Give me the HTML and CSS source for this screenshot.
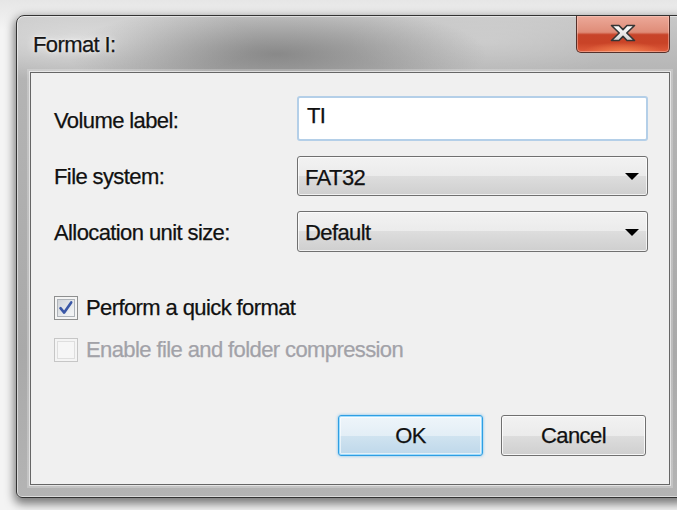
FILE: index.html
```html
<!DOCTYPE html>
<html lang="en">
<head>
<meta charset="utf-8">
<title>Format I:</title>
<link rel="stylesheet" href="styles.css">
</head>
<body>
<div class="window">
  <div class="titlebar">
    <span class="title">Format I:</span>
    <button class="close" type="button" aria-label="Close">
      <svg width="26" height="18" viewBox="0 0 26 18">
        <defs>
          <linearGradient id="xfill" x1="0" y1="0" x2="0" y2="1">
            <stop offset="0" stop-color="#ffffff"/>
            <stop offset="1" stop-color="#d4d4d4"/>
          </linearGradient>
        </defs>
        <polygon points="1.5,1.5 9,1.5 13,5.6 17,1.5 24.5,1.5 16.8,9 24.5,16.5 17,16.5 13,12.4 9,16.5 1.5,16.5 9.2,9" fill="url(#xfill)" stroke="#353535" stroke-width="1.6" stroke-linejoin="round"/>
      </svg>
    </button>
  </div>
  <div class="client">
    <div class="form">
      <label class="label label-first">Volume label:</label>
      <div class="textbox">TI</div>
      <label class="label">File system:</label>
      <div class="combo">
        <span>FAT32</span>
        <svg class="arrow" width="14" height="7" viewBox="0 0 14 7"><polygon points="0,0 14,0 7,7" fill="#000"/></svg>
      </div>
      <label class="label">Allocation unit size:</label>
      <div class="combo">
        <span>Default</span>
        <svg class="arrow" width="14" height="7" viewBox="0 0 14 7"><polygon points="0,0 14,0 7,7" fill="#000"/></svg>
      </div>
    </div>
    <div class="checks">
      <div class="check">
        <span class="box">
          <svg width="22" height="22" viewBox="0 0 22 22"><path d="M5.5 11.2 L9.2 15.6 L16.2 5.4" fill="none" stroke="#3a57a6" stroke-width="2.6" stroke-linecap="round" stroke-linejoin="round"/></svg>
        </span>
        <span>Perform a quick format</span>
      </div>
      <div class="check check-disabled">
        <span class="box"></span>
        <span>Enable file and folder compression</span>
      </div>
    </div>
    <div class="buttons">
      <button class="btn btn-default" type="button">OK</button>
      <button class="btn" type="button">Cancel</button>
    </div>
  </div>
</div>
</body>
</html>
```
FILE: styles.css
```css
html, body {
  margin: 0;
  height: 100%;
  overflow: hidden;
}

body {
  background: linear-gradient(#e6e6e6, #f4f4f4 30px, #f4f4f4);
  font-family: "Liberation Sans", Arial, sans-serif;
  font-size: 22px;
  letter-spacing: -0.6px;
  color: #111;
  -webkit-text-stroke: 0.25px currentColor;
}

/* Aero glass frame */
.window {
  box-sizing: border-box;
  margin: 15px 0 0 16px;
  width: 670px;
  height: 483px;
  display: flex;
  flex-direction: column;
  padding: 0 15px 12px 13px;
  border: 1px solid #333;
  border-radius: 8px 8px 6px 6px;
  background:
    radial-gradient(ellipse 210px 50px at 260px 38px, rgba(95, 95, 95, 0.55), rgba(95, 95, 95, 0)),
    radial-gradient(ellipse 170px 40px at 70px 26px, rgba(255, 255, 255, 0.45), rgba(255, 255, 255, 0)),
    radial-gradient(ellipse 140px 40px at 470px 26px, rgba(255, 255, 255, 0.2), rgba(255, 255, 255, 0)),
    linear-gradient(#c8c8c8, #b4b4b4 60px, #a9a9a9 70%, #b4b4b4);
  box-shadow:
    0 4px 10px 2px rgba(0, 0, 0, 0.5),
    inset 0 0 0 1px rgba(255, 255, 255, 0.5);
}

.titlebar {
  height: 56px;
  flex: none;
  display: flex;
  justify-content: space-between;
  align-items: flex-start;
}

.title {
  padding: 16px 0 0 3px;
  line-height: 26px;
  color: #161616;
  text-shadow: 0 0 8px rgba(255, 255, 255, 0.95), 0 0 3px rgba(255, 255, 255, 0.8);
}

.close {
  width: 94px;
  height: 37px;
  margin: 0;
  padding: 0;
  display: flex;
  align-items: center;
  justify-content: center;
  border: 1px solid #55302a;
  border-top: none;
  border-radius: 0 0 5px 5px;
  background:
    radial-gradient(ellipse 40px 10px at 50% 100%, rgba(255, 150, 90, 0.7), rgba(255, 150, 90, 0)),
    linear-gradient(#eca999 0%, #df8c78 45%, #c8442a 52%, #c94327 75%, #df5b3b 100%);
  box-shadow: inset 0 0 0 1px rgba(255, 210, 200, 0.45);
}

.close svg {
  margin-top: -3px;
}

/* Dialog client area */
.client {
  flex: 1;
  display: flex;
  flex-direction: column;
  box-sizing: border-box;
  padding: 23px 21px 28px 23px;
  background: #f0f0f0;
  border: 1px solid #666;
  box-shadow: 0 0 0 1px rgba(255, 255, 255, 0.55), 0 0 0 3px rgba(255, 255, 255, 0.22);
}

.form {
  display: grid;
  grid-template-columns: 243px 351px;
  grid-template-rows: 45px 40px 41px;
  row-gap: 15px;
}

.label {
  align-self: center;
  line-height: 26px;
  padding-top: 2px;
}

.label-first {
  padding-top: 5px;
}

.textbox {
  box-sizing: border-box;
  padding: 5px 8px 0;
  line-height: 26px;
  background: #fff;
  border: 2px solid #b4cfe8;
  border-radius: 3px;
}

.combo {
  box-sizing: border-box;
  display: flex;
  align-items: center;
  justify-content: space-between;
  padding: 3px 8px 0 7px;
  line-height: 26px;
  border: 1px solid #707070;
  border-radius: 3px;
  background: linear-gradient(#f2f2f2 0%, #ebebeb 50%, #dddddd 50%, #cfcfcf 100%);
  box-shadow: inset 0 0 0 1px rgba(255, 255, 255, 0.7);
}

.arrow {
  margin-top: -2px;
}

/* Check boxes */
.checks {
  margin-top: 43px;
  display: flex;
  flex-direction: column;
  gap: 16px;
}

.check {
  display: flex;
  align-items: center;
  gap: 8px;
  height: 26px;
  line-height: 26px;
}

.box {
  box-sizing: border-box;
  width: 24px;
  height: 24px;
  display: flex;
  align-items: center;
  justify-content: center;
  border: 1px solid #8e8f8f;
  background: linear-gradient(135deg, #c9cdd3, #eef0f2 70%, #f8f8f8);
  box-shadow: inset 0 0 0 2px #f4f4f4, inset 0 0 0 3px #aeb3b9;
}

.check-disabled {
  color: #a2a2a8;
}

.check-disabled .box {
  border-color: #c6c6c6;
  background: #f6f6f6;
  box-shadow: inset 0 0 0 2px #f4f4f4, inset 0 0 0 3px #dedede;
}

/* Push buttons */
.buttons {
  margin-top: auto;
  padding-right: 2px;
  display: flex;
  justify-content: flex-end;
  gap: 18px;
}

.btn {
  box-sizing: border-box;
  width: 145px;
  height: 41px;
  margin: 0;
  padding: 0;
  font: inherit;
  letter-spacing: inherit;
  color: #111;
  border: 1px solid #707070;
  border-radius: 3px;
  background: linear-gradient(#f2f2f2 0%, #ebebeb 50%, #dddddd 50%, #cfcfcf 100%);
  box-shadow: inset 0 0 0 1px rgba(255, 255, 255, 0.8);
}

.btn-default {
  border-color: #2f9ee2;
  background: linear-gradient(#eef5fa 0%, #e3eef6 50%, #d0e3f0 50%, #bed8ea 100%);
  box-shadow:
    0 0 3px rgba(60, 170, 240, 0.7),
    inset 0 0 0 1px rgba(140, 215, 255, 0.8),
    inset 0 0 0 2px rgba(255, 255, 255, 0.6);
}
```
